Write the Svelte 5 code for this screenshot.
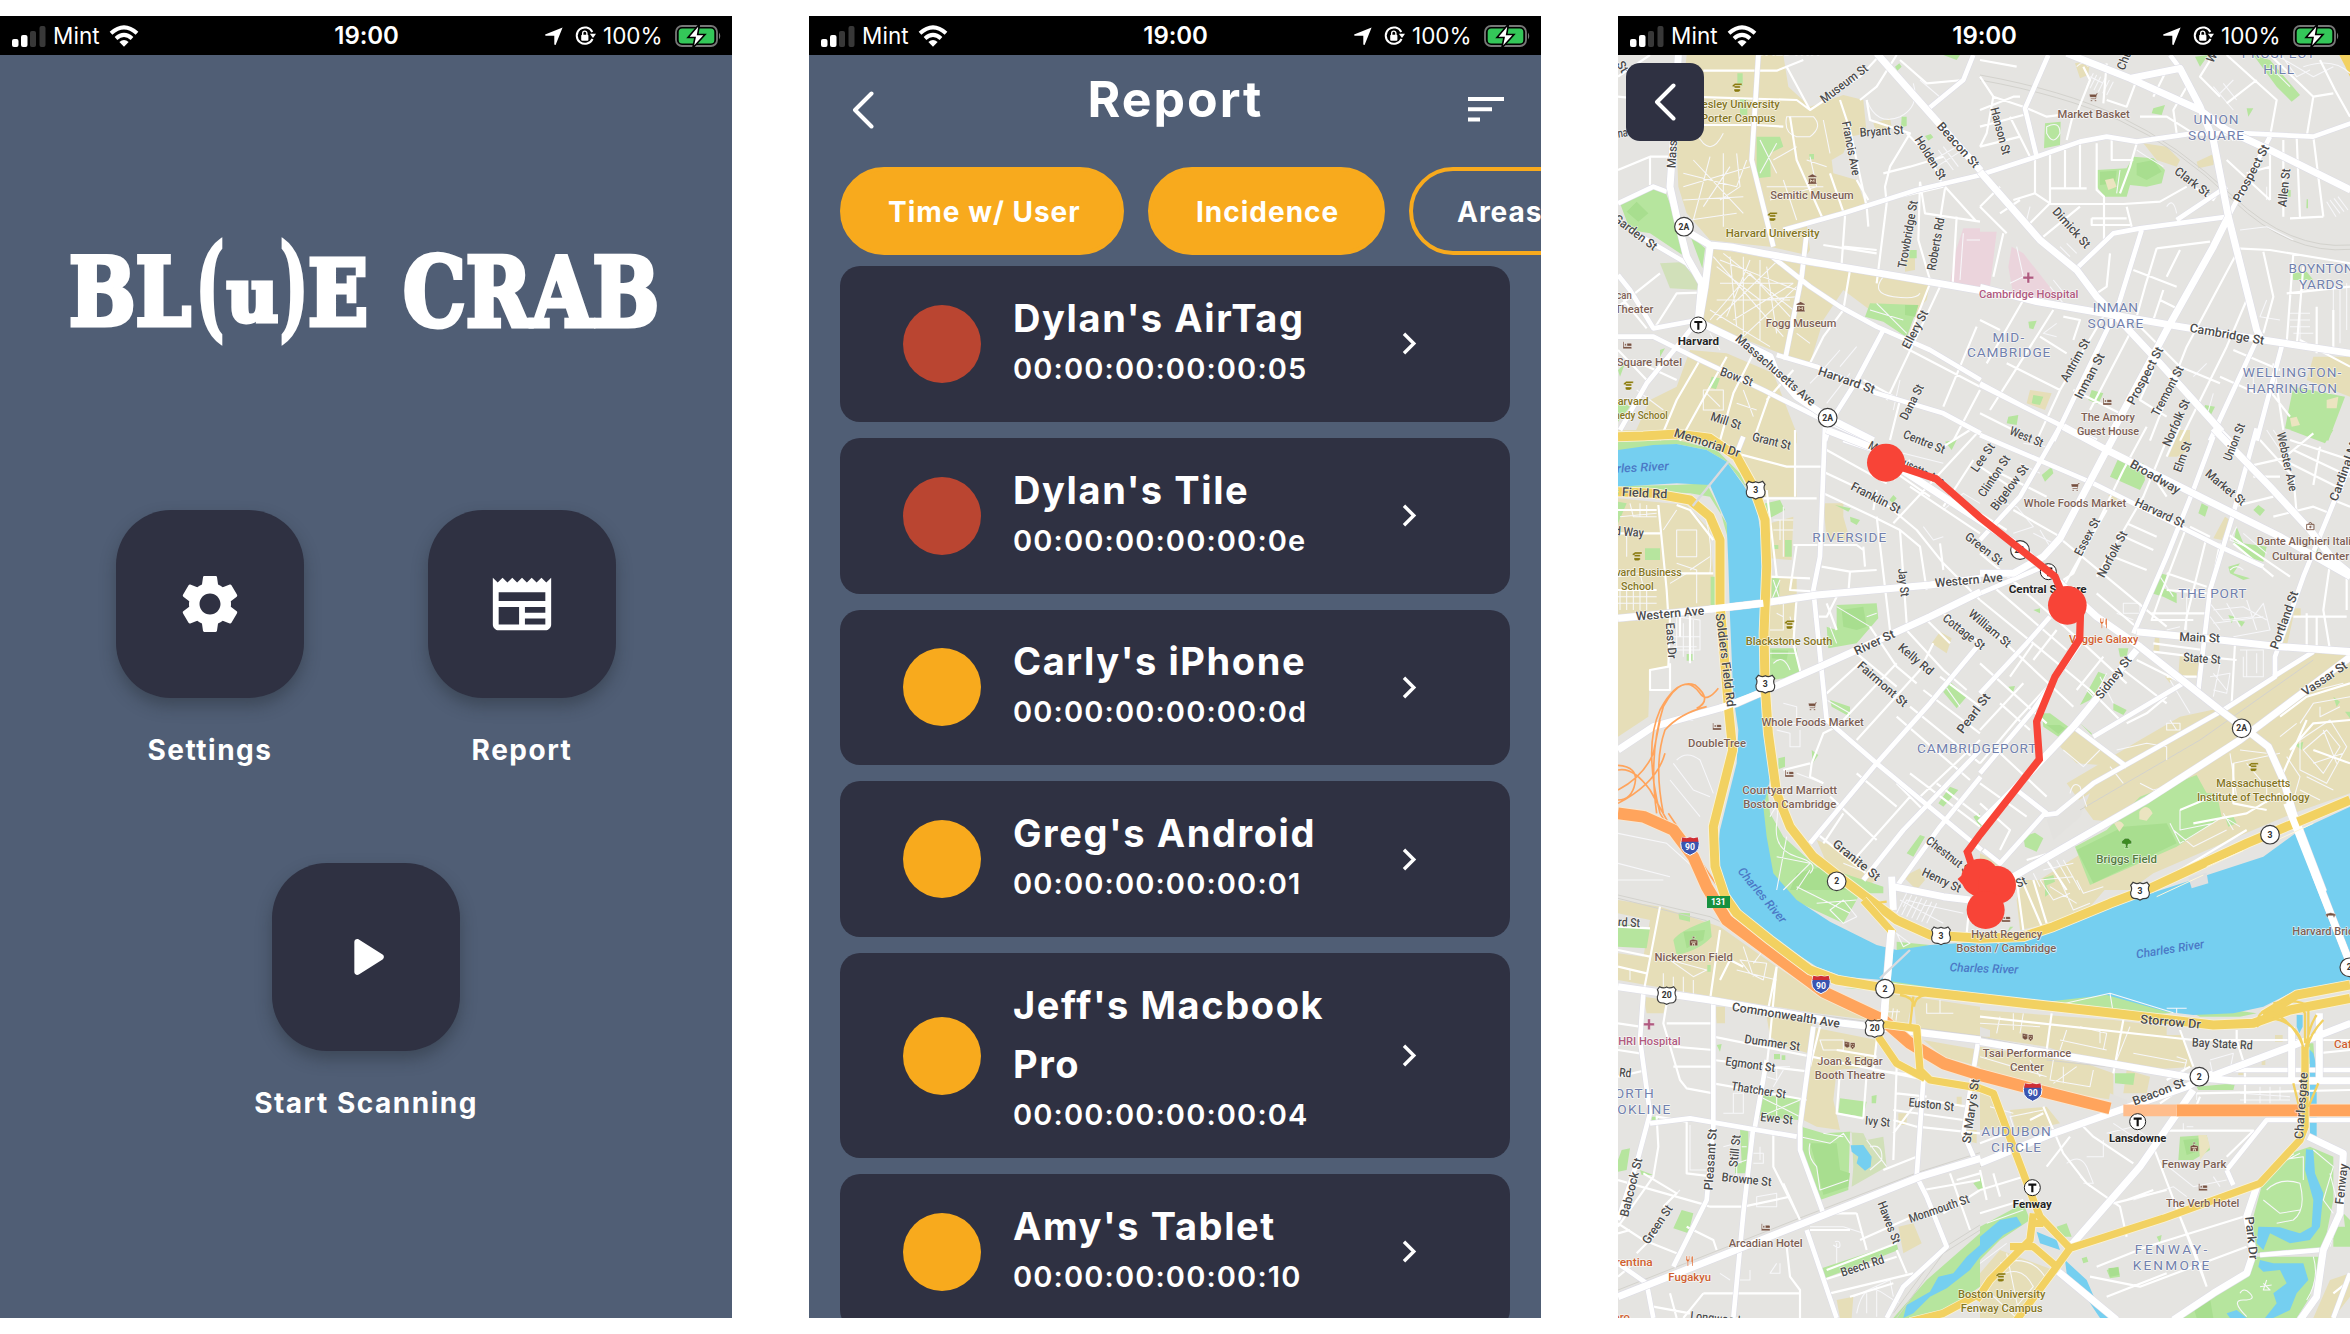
<script>
  const filters = [
    { name: 'Time w/ User', on: true },
    { name: 'Incidence', on: true },
    { name: 'Areas', on: false }
  ];
  const devices = [
    { name: "Dylan's AirTag", mac: '00:00:00:00:00:05', level: 'high' },
    { name: "Dylan's Tile", mac: '00:00:00:00:00:0e', level: 'high' },
    { name: "Carly's iPhone", mac: '00:00:00:00:00:0d', level: 'mid' },
    { name: "Greg's Android", mac: '00:00:00:00:00:01', level: 'mid' },
    { name: "Jeff's Macbook Pro", mac: '00:00:00:00:00:04', level: 'mid' },
    { name: "Amy's Tablet", mac: '00:00:00:00:00:10', level: 'mid' }
  ];

  const logo = [
    { t: 'BL', x: 69, y: 325, w: 122, s: 94 },
    { t: '(', x: 196, y: 325, w: 28, s: 110 },
    { t: 'u', x: 227, y: 321, w: 51, s: 72 },
    { t: ')', x: 280, y: 325, w: 28, s: 110 },
    { t: 'E', x: 308, y: 325, w: 60, s: 90 },
    { t: 'CRAB', x: 403, y: 326, w: 256, s: 96 }
  ];

  // Map tiles, two columns by three rows. Every tile draws in its own coordinates.
  const tiles = [
    {
      x: 0, y: 0,
      campus: 'M230 165H520L535 260L600 320L700 285L760 300L770 400L720 410L700 460L665 480L670 520L740 540L765 610L700 640L590 670L600 750L590 765L480 740L380 730L300 720L230 640L205 560L200 440Z M310 745L620 800L725 810L960 850L950 900L930 920L890 990L780 930L700 870L640 960L600 1090L510 1060L280 970L290 800Z M240 1050L350 1060L490 1120L560 1300V1330H60L120 1200L200 1160Z M790 370L840 355L845 380L800 400Z M885 775L915 770V810L885 815Z',
      sage: 'M150 790L240 785L275 870L180 865Z',
      park: 'M30 610L130 565L165 572L195 650L240 780L120 700L60 690Z M240 705L285 745L277 805Z M440 410H510L520 440L480 460L482 530L440 535Z M780 910L925 915L890 1012L820 965L765 950Z M305 1130L330 1135L318 1168L296 1160Z M382 220H398V258H382Z M390 295H412V345H390Z M855 200L868 190L875 200L862 212Z M875 350H890V378L873 382Z M945 408L962 402L970 412L955 422Z M898 750H920V775H898Z M598 462H612V478H598Z M24 1200L60 1220L24 1265Z M1000 165H1050L1040 180Z M24 1110L45 1090L30 1130Z M150 1050L165 1045L150 1070Z',
      darkpark: 'M50 635L80 605L115 640L85 665Z M885 915H925L915 950L885 945Z',
      pink: 'M1060 685H1110V865L1020 850L1035 760Z',
      major: 'M205 165L190 420L180 560L200 650L230 770L275 850L265 960 M240 700L300 735L370 742L460 760L600 785L870 830L1112 872 M265 965L400 1030L480 1070L500 1120L560 1190L653 1253L790 1322 M800 160L960 340L1112 512 M300 740L285 860L268 960',
      mid: 'M520 690L700 640L920 570L1112 525 M24 610L130 560L170 575 M60 690L230 790L280 850 M24 1010L130 1010L270 1080L460 1170L620 1250L780 1322 M445 165L425 480L490 740 M480 765L600 860L690 920L800 980L960 1050L1112 1140 M500 1065L620 1100L800 1180L1000 1240L1112 1300 M950 330L1060 240L1090 165 M820 990L735 1150L665 1260L645 1322 M265 960L200 1040L110 1150L30 1290 M590 700L575 830L525 1080 M24 825L60 870L130 985L265 960',
      minor: 'M230 290L560 300L600 330L750 230L810 165 M280 212H500L580 180 M530 200L600 330 M210 375H440L520 380 M690 300L720 390L770 620L775 680 M770 300L780 360L900 400L840 500L825 560L830 610L800 850 M820 520L900 500L1000 470 M930 545L945 640L1110 665 M1040 650L1028 850 M700 740L800 750 M720 810L700 930L640 1010L600 1090 M540 350L560 480L640 660 M660 520L705 650L695 790 M24 510L120 470V555 M120 470H200 M130 990L200 880L270 878 M350 1070L210 1322 M430 1060L370 1180L330 1322 M480 1180L430 1322 M880 1040L1110 1160 M760 1140L870 1200L840 1320 M1005 560L1100 665 M890 400L960 470L1000 560 M990 860L920 1010L830 1200 M1100 980L1000 1220 M1110 1170L1030 1322 M800 760L640 735 M930 545L925 720L960 840 M1005 565L990 660 M24 1050L110 1140 M70 1080L200 1140 M270 1080L200 1200L150 1320 M110 985L40 900 M24 920L100 860L150 820 M550 1110L470 1200 M960 850L890 1030 M860 165L800 260L750 300 M870 180L950 250L1060 240 M24 230L120 165 M120 300L24 290 M830 600L1000 560 M740 540L775 600',
      thin: 'M310 770L520 1010 M340 760L550 930 M500 785L320 960 M560 860L400 1010 M330 850H550 M320 900H540 M400 770V1010 M450 780V1020 M360 770L380 980 M320 800L450 900L560 890 M420 780L350 950 M470 800L500 1000 M300 930L480 1040 M330 780L560 870 M300 960L420 820L540 950 M370 960L550 850 M250 480L400 640 M220 520L380 560L410 480 M260 400Q300 480 340 400 M340 460V680 M300 470L250 660 M220 600L400 590 M240 660L380 640 M220 560L420 500 M280 620L360 500 M380 460L390 560L330 600 M530 350Q520 400 560 410H600Q640 380 610 350Z M450 420L500 520 M500 430L450 520 M470 560H640 M480 600L620 560L600 470 M520 540L560 660 M590 480L650 500 M490 480L560 440 M640 360L660 460 M820 830Q780 880 850 890T930 880 M780 930L880 960 M800 910L890 1000 M770 300Q800 380 870 350Q930 320 910 250 M985 450L1030 510 M1000 440L1045 500 M970 480L1040 440 M980 500L1050 455 M280 1170H340V1230H280Z M290 1180L330 1220 M400 1170L430 1250 M380 1210L440 1230 M80 1170L160 1230 M870 1140L850 1230 M690 1050L620 1130L600 1150 M740 1040L690 1100 M650 1210L720 1120 M300 1000L330 1050 M560 1000L600 1030 M1060 700L1050 840 M1110 720H1070 M930 240L1000 300'
    },
    {
      x: 1110, y: 0,
      campus: 'M285 190L330 180L325 225L300 235Z M490 430L560 440L600 480L590 500L530 480Z M650 485L705 460L700 495L655 505Z M1000 1070L1110 1070V1190L980 1140Z M150 1170L215 1180L195 1230L140 1210Z M600 1290L630 1290L620 1330H595Z',
      sand: 'M375 540L400 535L410 560L385 570Z M1040 1200L1075 1190L1070 1225L1040 1225Z M930 1255L950 1250L960 1275L935 1280Z',
      park: 'M195 370L242 365L240 435L192 445Z M350 510L440 505L460 470L520 475L555 510L545 550L500 560L450 555L440 590L375 590L350 560Z M520 325L555 315L545 345L515 340Z M645 170L685 165L660 200Z M820 165L870 180L960 285L935 305L890 260Z M800 325H820L805 350Z M335 1170L370 1180L355 1212L325 1200Z M675 1215L705 1220L690 1250L670 1240Z M145 965L170 962L160 988L148 985Z M940 1160L1095 1190L1045 1322L915 1285Z M935 820L980 815L1000 840H940Z M980 598H984V625H979Z M922 570H932V590H922Z M85 1250L115 1245L110 1275L80 1270Z M160 1185L190 1190L180 1215L155 1210Z',
      darkpark: 'M470 490L520 480L545 515L500 540L470 525Z M360 515L410 512L405 550L360 555Z',
      pink: 'M0 695H50L30 860H0Z M95 740L130 760L240 900L100 885L85 800Z',
      major: 'M260 160L450 235L660 330L740 390L870 450L1112 570 M0 515L180 720L290 810L350 890L400 940L540 1090L725 1295 M0 862L170 905L400 945L600 980L850 1020L1112 1060 M745 650L700 740L560 990L400 1290 M450 235L600 205L660 320L700 420L745 650L830 990L850 1030',
      mid: 'M0 525L170 470L300 425L380 410L470 425L640 400L800 400L1000 410L1112 370 M205 165L135 325L170 470 M290 805L400 700L480 685L745 650 M590 660L740 560 M870 410L745 650 M485 690L420 900L400 950L220 1322 M0 1150L130 1220L250 1280L350 1322 M0 1155L120 1215 M830 1020L690 1322 M905 1040L830 1322 M720 1290L760 1330 M570 165L600 205',
      minor: 'M0 180L110 200 M0 230L40 290L130 320L200 350L280 340L260 420 M0 330L100 290L120 290 M0 380L130 345 M40 290L20 400L0 440 M90 350L150 470 M0 440L120 410 M210 460V610 M255 450V565 M300 430V565 M210 565H320 M165 480V580L210 610 M350 430V570L372 590V720 M395 420V480H460 M470 430L450 500L420 580 M210 612H430L540 605L620 560 M100 600L165 580 M440 620L455 680 M335 655H440 M335 655V675H450 M60 640L120 600 M150 670L210 610 M190 710L300 620 M530 745L690 725 M530 745L495 860L470 950 M460 810L590 860 M390 760L380 860L350 880 M600 750L560 830 M550 870L520 960 M540 900L590 925 M770 745L870 750L1112 790 M850 755L880 890L850 1000 M940 760L920 1030 M770 760L620 1040L510 1322 M800 900L740 1040L600 1322 M870 165L1000 290L980 410 M740 165L890 300L870 410 M1110 350L1065 270L1020 180 M830 240L740 310 M1000 290L1060 280 M700 165L660 230L720 290 M560 210L520 290 M620 260L580 330L590 400 M470 240L440 320L380 300 M380 190L370 310 M1000 410L1030 650 M950 410L960 655 M910 420V650 M870 460V600 M930 655L1030 650 M740 480L870 600 M720 570L700 600L640 560 M800 520L870 500 M690 340L760 420 M370 950L240 1170L170 1322 M220 930L100 1120L30 1230 M130 900L20 1090 M0 960L60 990 M450 1000L330 1230 M250 950L300 960L280 1020 M470 970L600 1100L720 1150 M0 1240L100 1290 M760 1050L900 1110 M720 1130L830 1180 M880 1090L910 1290 M860 1160L930 1250 M1110 860L920 880 M1010 920V1060 M1060 930V1060 M970 800L950 1040 M520 1110L480 1200L560 1250 M280 1170L420 1240 M180 1010L260 1060 M80 1090L240 1170 M60 560L0 620 M70 700L40 830 M80 700L0 620 M290 340L330 240L310 200 M640 400L560 350H480 M960 1020L1110 1100',
      thin: 'M330 230L370 250 M340 220L320 260 M350 225L330 265 M362 230L342 270 M375 235L355 275 M388 240L368 280 M400 245L380 285 M290 200Q310 180 325 200 M200 380Q240 360 240 400Q220 440 200 400Z M470 450L500 470L550 500 M420 510L410 580 M560 620Q580 590 590 640 M730 250L770 300 M760 240L720 280 M700 260L760 330 M870 200L930 260 M900 160L950 230L990 210 M880 160L1000 230L1060 200 M1050 600L1080 640 M1062 595L1092 635 M1074 590L1104 630 M1040 605L1068 650 M930 940H990 M930 960H990 M930 980H990 M940 1000H1000 M960 930V1040 M1060 850V1000 M1080 870V1030 M1100 850V990 M780 690L860 680L940 720 M860 900L840 950L900 960 M640 1130L680 1090 M230 970L190 1000L230 1010 M240 740L270 770 M260 730L290 760 M210 860L250 910 M220 840L260 890 M110 740L130 830L90 850 M150 620L140 660 M970 200Q1060 170 1110 220 M820 1130V1180 M700 1180L680 1250 M860 560V600',
      rail: 'M0 225Q250 270 420 350T760 590T1110 735 M0 240Q250 285 420 362T760 602T1110 748'
    },
    {
      x: 0, y: 1290,
      campus: 'M24 0H550L560 200H460L420 120L350 60L200 20L24 30Z M24 205L230 225L300 300L310 430V540L24 565Z M24 575L185 565L175 710L120 720L115 860L24 920Z M480 440H560V520L550 640H475V500Z M480 280L550 260L545 390L480 385Z M640 220H700V260L720 330L650 330Z M965 640L990 605L1025 625L1010 670Z M620 1230L700 1260L800 1350L760 1375L650 1300Z M880 1340L930 1315L945 1350L920 1380Z',
      park: 'M24 35L200 30L320 60L390 130L440 240L455 300L430 200L350 95L290 60L200 42L24 62Z M24 168L200 165L290 160L330 240L355 330L350 280L300 200L240 190L24 178Z M302 440H316V540H302Z M445 225L510 210L525 240L450 280Z M680 525L800 520L805 565L740 640L655 655L650 590L680 600Z M480 655L560 655L570 740L480 750Z M485 445H508V505H485Z M105 355H150V390H105Z M24 215L50 220L24 280Z M660 810L720 830V860L665 830Z M995 780L1015 750L1070 800L1040 835Z M505 985L525 980V1010L505 1018Z M605 960L625 975L608 1000Z M470 1050L480 1150L520 1220L620 1310L700 1330L820 1370V1390H490L470 1260L455 1160Z M230 672H248V692H230Z M720 260L750 270L740 285L722 275Z M675 225L722 235L715 245Z M490 345H505V357H490Z M525 330H545V380H525Z M1005 35L1040 30L1025 60Z M985 1120L1020 1070L1045 1080L1000 1130Z M890 1270L930 1215L945 1220L910 1280Z M838 210L850 195L860 205L848 220Z M1090 1160L1110 1150V1190Z',
      darkpark: 'M695 540L760 530L770 590L740 600L700 590Z M485 660L535 662L530 690L485 685Z M560 1330L640 1310L720 1380H540Z',
      major: 'M24 565L330 535L455 520L620 495L960 465L1112 445 M24 960L130 890L380 820L630 710L740 660L960 560L1112 485 M650 0L780 50L830 80',
      mid: 'M645 -10L630 380L610 480L650 870L800 1000L1115 1260 M1110 640L960 820L800 1000L600 1240 M1110 960L880 1200L760 1350 M1112 1040L990 1190L860 1370 M700 30L790 60 M400 20L380 70',
      minor: 'M380 70L530 110H640 M555 0V200 M460 205H620 M640 125L800 200L920 300L1000 400L1110 510 M640 190L790 260L870 300L930 350L950 480 M800 260L840 600 M870 300L890 580 M635 410L720 425L800 420 M560 345L540 480L620 485 M550 345H630 M720 425L715 490 M760 350L765 410 M640 345H740L760 360 M650 520L680 600 M680 500L650 560H610 M780 590L860 710L920 760 M740 670L860 770 M560 500L550 640L575 740 M480 440L600 445 M650 790L760 690 M700 870L860 700 M740 930L930 720 M620 870L650 870 M660 1100L800 1230 M740 1030L860 1130 M860 1060L940 1140 M900 1030L1110 1190 M740 1280L900 1100 M620 1210L780 1340 M700 1150L640 1240 M930 1100L1110 930 M980 1060L1110 1160 M860 860L1080 1050 M900 830L1110 1000 M940 780L1110 910 M990 740L1110 830 M880 590L1000 720L1070 780 M950 570L1020 640 M1000 550L1110 640 M970 640L930 720 M700 880L640 910L605 1000L600 1040L640 1060 M520 1020L600 1000 M480 450L475 520 M200 225L240 240L310 330 M145 225L170 480L175 560 M24 310H150 M150 430H310 M24 480H140 M180 560L175 710L120 720V780H180V700 M240 550V700 M210 560V620 M24 240H140 M1110 0L850 280 M1000 50L1080 0 M900 170L1110 310 M860 130L960 200 M800 180L790 240 M990 340L1000 420 M470 180L500 440 M850 150L900 90 M1090 90L1000 230 M650 60L830 160 M1020 200L1110 260',
      thin: 'M60 220L70 260H140 M90 220V260 M110 225V260 M30 260L140 250 M50 310V380 M200 240L160 300 M200 300H260V380H200Z M200 400L260 420V520 M180 460L230 430 M280 240Q310 330 300 430 M24 500H140 M24 520H140 M30 480V540 M50 480V540 M70 480V540 M90 480V540 M110 480V540 M24 440L90 430L100 470 M200 560L270 570V660H200Z M220 580V680 M250 570V690 M190 620H270 M190 650H260 M190 1000L250 1080L300 1100 M180 1050L270 1160 M200 990Q230 960 270 990L310 1090 M24 1210L170 1240L270 1330 M24 1300L180 1340 M24 1350H160 M520 520V600H480 M500 550L520 560 M520 820L560 830V880H500 M500 900L540 910V950H570V900 M560 1030L640 1060 M540 560L550 600 M490 270H550 M520 230V380 M510 270V330 M550 300H490 M480 670L560 670 M490 700Q520 670 540 720 M480 1160Q510 1100 500 1180T560 1280T600 1330 M500 1280L600 1300L520 1380 M530 1220L500 1380 M560 1380L600 1320 M680 530L780 590 M770 560L800 550 M660 590L680 640 M490 450L510 510 M510 450L485 510 M650 810L720 850 M1000 760L1050 830 M940 290L970 330L1000 320 M820 110L880 70L1000 100 M1000 240L1060 190L1110 220 M700 1300L800 1340 M240 420L300 380 M150 880L250 870'
    },
    {
      x: 1110, y: 1290,
      campus: 'M600 0H630V60L590 80L565 80Z M385 195L420 190L400 230Z M735 260L750 270L725 330L700 325Z M525 620H538V665H520Z M600 670L660 690L650 740L595 735Z M555 740L580 735L570 760Z M940 535H962V560H940Z M905 570L940 560L920 650H900Z M280 900L340 930L430 1010L290 1000L240 950Z M1000 665H1110V1090L940 1150L820 1200L520 1330L450 1380H130L450 1180L340 1170L260 1060L480 930L600 860L740 830L880 740Z M0 1270L60 1300L40 1350L0 1330Z M1060 900H1110V990H1070Z',
      plain: 'M200 1170L330 1090L300 1160L220 1230Z',
      park: 'M415 85L435 100H490L495 150L480 180L390 140Z M665 220L685 230L675 260L655 250Z M835 225L855 240L840 258L820 240Z M185 135L215 110L220 130L195 155Z M770 290L790 340L860 350L850 395L800 380L760 340Z M745 410L780 400L760 430L810 445L790 450L750 430Z M540 430L560 435L550 475L590 490V520L550 500L515 490Z M745 555L765 560L755 580Z M770 570L795 575L785 590Z M415 655L445 655L440 680H420Z M355 725L380 735L330 810L300 825Z M400 820L440 840L430 855L400 840Z M185 850L210 850L265 890L235 920L190 890Z M300 880L335 910V915Z M85 770L105 768L98 790Z M130 1220L165 1208L190 1225L170 1265L135 1250Z M285 1250L380 1200L480 1100L650 1035L680 1090H710L725 1160L590 1250L330 1365Z M190 1345L220 1335L225 1355L195 1368Z M160 540L180 535V550Z M1060 800L1080 815L1070 830Z M945 945L970 935L965 960Z M1095 845H1110V865Z M20 420H40L35 440Z M1000 365L1015 355L1010 380Z M930 0H1060L1035 40Z M0 1165L15 1180L0 1190Z M735 1160L760 1160L770 1180L745 1190Z',
      darkpark: 'M290 1260L430 1190L560 1180L590 1240L340 1360Z M200 885L240 885L255 895L235 912Z',
      sand: 'M478 1145Q500 1115 518 1150L500 1172L478 1168Z M402 1180Q420 1165 432 1185L418 1205Z',
      major: 'M0 430L100 430L190 380L240 325L380 60L415 -5 M-280 90L120 350L350 560L480 650L720 840L800 900L865 950L910 1050L940 1150L1030 1385 M700 -5L870 170L990 300L1060 390L1112 432 M470 605L720 630L900 650L1112 665 M1112 680L780 930L500 1110L100 1340 M470 660L280 890L100 1080L0 1180 M250 -10L380 60L500 120L640 190L760 250L900 320L1112 440',
      mid: 'M830 -5L760 250L690 480L655 780 M700 20L640 180L560 380L460 610 M1110 110L1060 220L970 440L885 680V740L730 840L340 1060L230 1150L190 1155L60 1300L10 1260 M1000 665L880 740 M340 920L610 760 M280 890L440 1010 M0 15L200 100L340 160L560 270L720 350L850 410 M240 -10L120 200L0 330 M0 490L190 410 M300 640L160 840L0 1030 M0 790L140 640L210 560 M110 1080L200 1150',
      minor: 'M500 -10L430 120L280 430L250 450 M560 30L490 200L350 440 M420 80L500 110L560 200 M380 240L250 470 M240 325L560 590 M600 -10L560 80 M440 280L530 320 M410 310L520 360 M400 380L500 420 M620 290L540 500L515 570H640 M680 320L620 560L615 600 M560 480L680 490 M630 290L690 320 M515 550H680 M560 430L680 470 M720 340L700 440 M760 340L880 440 M740 310L930 440 M800 110L910 85L1000 10 M820 140H900 M870 170L950 250 M840 30L940 140L950 250 M930 30L1110 90 M940 60L1110 140 M910 90L1090 180 M1000 165L1020 50 M1060 210L1110 230 M880 260L1000 230L1050 250 M1050 400L1030 540L1050 660 M1100 430V540 M940 560H1100 M980 550V650 M1010 560V650 M520 665L640 680 M520 640L670 660 M670 680L770 690 M765 640L755 820 M560 740H650 M860 650L780 640 M0 510L160 640L330 780L420 870 M40 470L260 660 M60 420L310 640L440 760 M0 570L120 680L280 830 M0 700L200 880 M0 900L130 760 M0 1000L110 870L230 740 M160 640L90 740 M230 600L160 690 M370 680L290 780 M60 820L150 900 M50 960L200 1100 M470 690L610 760 M430 720L560 820 M440 880L500 850L560 800 M0 1060L140 1160 M0 1120L90 1200L60 1260 M140 1290L240 1260 M200 1290L260 1380 M0 370L120 470 M0 250L80 300 M100 240L240 320 M60 130L200 200 M0 110L90 170 M640 1180L800 1150L900 1090 M600 1140L720 1090 M500 1380L800 1200 M760 1000V1120L860 1140 M980 870L900 1050 M900 860L980 800L1110 760 M1110 870L1000 880L930 960 M1000 960L1110 1000 M880 200L760 230 M350 490L480 600',
      thin: 'M690 520L730 570L820 560L850 520L870 600L760 620 M700 540L790 530L860 570 M720 600L690 560 M740 520L780 590 M800 510L830 600 M700 580L850 560 M620 500V600 M580 570H620 M560 600L600 590 M780 660H850V740H790V680 M800 660V740 M830 670V730 M690 740L750 730L740 790L700 780 M700 730L740 780 M720 700L700 800 M560 880H600V900H560Z M570 870L590 900 M480 1060L520 1080L560 1070 M250 960L310 1010L360 960 M270 1090Q280 1050 300 1070L320 1130 M410 960L500 940L560 950V990 M390 1010L430 1060 M360 740L400 820 M380 730L340 810 M320 780L350 810 M770 290L750 330L800 350 M790 310L860 370 M750 420Q770 400 790 420 M540 440L580 500 M600 1140V1200L700 1180 M580 1200L640 1250L740 1200 M570 1180L600 1240L730 1160L780 1190 M730 1150L760 1200 M960 930L1050 870L1100 950L1040 1060L960 1020Z M970 960L1040 900L1080 950L1030 1030Z M920 980L960 1040L940 1110 M900 920L950 880 M960 880L1000 820L1110 800 M1010 780L1090 760 M1020 830V860L1080 830 M1030 900L1070 1000 M980 1040L1060 1080 M1000 1000L1090 970 M780 960L860 970 M800 1000L850 1060 M760 1000L900 970 M860 1070V1120 M750 970L770 1100 M960 1080L1020 1110 M210 1300L250 1370 M230 1290L270 1360 M160 1330L180 1370 M250 1290L300 1380 M190 1320L280 1300 M180 1350L280 1340 M860 0L900 60 M880 0L900 30 M130 40L200 50 M40 210L110 230L160 290L100 310 M120 100L180 130 M160 310L220 340 M180 300L210 350 M430 520H480V550H430Z M410 550L460 570 M570 750L630 850',
      rail: 'M300 1140L660 930L1000 690'
    },
    {
      x: 0, y: 2640,
      campus: 'M24 60L150 80L330 140L500 260L620 340L800 400L780 420L620 400L310 350L24 300V220L100 230L120 120L24 100Z M100 350L170 360L160 400L110 400Z M600 440L800 480L790 560L680 570L670 660L690 750L620 740L580 720L600 560Z M910 350L1110 380V470L920 450Z M830 340L910 350L890 440L830 420Z M470 410H610L595 520L530 500L480 470Z M940 480L1110 510V560L1000 530Z M980 530L1110 590 M865 1040L910 1030L935 1090L880 1120Z M680 1260L730 1250L725 1314H690Z M865 700H890V735H865Z M1060 750H1100V790L1060 780Z M1040 650H1055V680H1040Z M315 380H345V430H320Z',
      park: 'M24 130L120 145L110 205L24 200Z M190 180Q210 150 300 120L305 170Q270 210 200 225Z M205 98L240 100V125L208 118Z M450 645L570 655L565 720L440 710Z M690 655L770 665L760 710L685 700Z M575 740L640 760L720 755L715 930L630 960L575 840Z M390 745L415 750V880H375V850H395Z M35 810L60 805L50 870L24 875V840Z M90 870L130 885H95Z M215 990L250 1000L235 1060L190 1045Z M635 1165L860 1090L865 1110L645 1195Z M850 1314L950 1200L1110 1060V1220L980 1310L900 1314Z M320 495L335 492L330 515Z M492 522H510V538H492Z M515 526H526V540H515Z M785 648L800 645L798 670H785Z M1090 910L1110 900V935Z M500 0L560 65L700 130L740 60L760 20L700 0Z M860 185L960 195L900 210H860Z M740 325L850 300L940 310L1040 330V345L700 325Z M740 700H760V710H740Z M125 710H145V722H125Z M292 255H302V275H292Z',
      sage: 'M700 755H725L730 860L725 920L830 860L820 770L770 780L760 760Z',
      darkpark: 'M600 790L680 790L690 870L720 880L715 920L640 945L620 860Z M220 155L285 150L280 180L230 205Z',
      water: 'M722 796L760 795L785 830L782 860L765 872L740 850L745 830L725 815Z M880 1314L890 1275L960 1235L985 1190L1030 1180L1070 1130L1110 1095V1130L1080 1170L1010 1225L960 1250L910 1300Z',
      plain: 'M860 30L1090 60L1070 160L920 150L860 90Z M700 130L760 30L850 150L840 205L760 190Z',
      yellow: 'M800 430L920 445L930 570L960 600L1112 625 M805 470L860 550L945 595 M760 60L850 160 M900 1325L1000 1300L1112 1240',
      yellowThin: 'M910 350L900 440 M870 345Q910 350 912 380 M945 345Q915 350 912 380 M790 70L830 65',
      major: 'M24 320L300 360L700 430L1112 480 M24 1250L580 1030L930 890L1112 835 M850 20L1000 50L1080 60 M843 150L820 420 M845 -10L850 90',
      mid: 'M310 370V740L290 960L190 1160 M100 340L90 480L120 700L80 850L24 1020 M120 730L240 715L560 770 M430 740L400 1000L370 1314 M610 440L570 740V810L640 1000 M590 1050L680 1314 M940 600L920 890L950 950L1010 1100L880 1220L830 1314 M24 1150L110 1210L130 1314 M470 540L435 740 M1105 480L1060 760L1095 840',
      minor: 'M150 80L100 340 M24 140L120 145 M24 210L120 230 M330 150L300 360 M500 260L480 470L470 560 M24 260L110 280 M310 470L1000 610 M310 540L600 575 M310 610L590 660 M170 370L160 430L210 600L230 625L310 640 M170 430H310 M190 500L310 510 M190 560H310 M24 510L90 520 M24 590L110 570 M400 260L360 240L330 300 M310 360L420 390 M630 440L600 560 M690 570L680 700L760 715 M800 480L790 570L950 590 M770 580L760 715 M860 560L850 840 M680 510L800 530 M950 660L1070 680 M850 720L920 740L1110 760 M850 690L1060 720 M850 760L940 640 M740 1000L770 1110 M750 1080L930 1000 M720 1250L850 1210 M230 725V880L310 890 M230 725L140 710L145 800L130 890L24 1040 M24 900L270 970L300 980 M100 880L200 940L160 980 M300 980H400L540 950 M520 910L570 1020 M490 760V860L560 1000 M24 1030L100 1080L200 1120 M80 1120L140 1060 M230 1040L310 1080L320 1110 M24 1060L60 1050 M640 1000L740 1000 M180 1240L200 1314 M24 1190L60 1160 M530 1100L540 1190L570 1230V1314 M280 1240H570 M280 1240L220 1314 M820 870L920 830 M860 640L950 650 M640 1200L860 1130 M660 1240L910 1180 M860 1110L890 1180 M720 1050L600 1050 M940 930L1110 900 M1020 880L1080 1050 M1110 930L1000 1000 M130 1280L240 1300 M650 1170L860 1090 M1110 880L1040 900 M1080 60L1070 160 M24 430L90 440 M500 260L470 410',
      thin: 'M160 280V320 M190 290V340 M220 290V340 M250 300V345 M60 270V300 M390 240L470 250L460 300L420 280Z M400 200L430 290 M430 250L460 210 M380 270L500 300 M630 480H700V510H640Z M830 395H870 M835 380L830 420 M850 385L845 420 M862 388L858 422 M880 80L890 60L970 80L1060 100 M870 60L1000 130 M890 40L860 100 M905 45L875 105 M920 50L890 110 M935 55L905 115 M950 60L920 120 M965 65L935 125 M980 70L950 130 M860 160L900 190L880 200Z M450 650L570 710 M570 660L450 710 M500 650V710 M600 790Q590 830 620 860L630 930L715 900 M570 770L660 790L700 760L720 790 M640 760L700 770 M780 800Q820 790 815 840L780 870 M770 780L830 860 M680 1090V1150 M675 1085Q690 1080 690 1095T670 1095 M380 900V850L410 840 M395 800H410 M430 820H460V850H430 M450 800V840 M370 640H400V700H370Z M340 700H380 M340 800L380 790 M380 840L360 850 M470 590L500 600V560H540 M490 620L520 570 M240 735V870H300 M500 1150L480 1180H510V1150 M420 1170V1200H390 M730 1250L840 1200L850 1250 M740 1300Q760 1200 820 1240T860 1260 M770 1240V1300 M800 1220V1310 M440 950L500 940V980H440Z M210 930L160 980 M330 1180L360 1200 M700 1040L760 1060 M600 1040H700 M560 20L720 100 M700 60L740 110L700 130L660 90Z M620 70L740 60 M850 310L940 340 M180 240L290 270L250 290Z M950 370V400H1030 M990 360V400',
      rail: 'M24 1230L580 1010L930 875L1110 818 M24 325L700 415L1110 468 M24 45L300 110L340 130 M24 55L290 122 M1110 1050L1000 1120L860 1314 M1110 1035L990 1110L850 1300'
    },
    {
      x: 1110, y: 2640,
      campus: 'M0 390L400 420L600 445L640 560L500 570L330 545L200 500L0 470Z M0 500L330 555L400 580L400 660L200 630L0 570Z M0 630L40 650L80 740L0 750Z M90 690L200 680L240 730L110 760Z M130 0H400L330 80L210 130L120 150L110 60Z M440 570L510 590L500 640L430 640Z M60 1110L220 1170L110 1314H0V1180Z M885 465H908V485H885Z M775 565L790 560V585H775Z M845 525H856V555H845Z M1050 1200L1110 1180V1250L1060 1314H1000Z',
      plain: 'M0 440L30 450V470H0Z M560 440H600V465H560Z M390 640L440 660V700H380Z',
      park: 'M210 362L380 340L470 350L580 398L500 405L300 375Z M640 400L740 388L830 400L780 410H660Z M405 580H465L460 615L405 610Z M650 620L765 610L760 630H655Z M600 770L680 765L690 810L640 840H595Z M900 830L990 800L1060 830V960L1030 1110L820 1120V1010L850 900Z M810 1130H1020L990 1250L950 1314H600L700 1245L800 1190Z M985 490H1000L1005 560L985 550Z M0 1040L130 970L150 1020L60 1080L0 1140Z M380 1170L415 1160L420 1190L390 1195Z M530 1070L545 1065L540 1090Z M305 1135L320 1130L325 1145L310 1150Z M230 1040L260 1030L275 1070L240 1070Z M0 880L10 930H0Z M100 140H90L80 160Z M360 80L440 55L430 80L370 90Z M195 10L210 40L195 50Z M1060 1040H1110V1100H1060Z M1090 1000L1110 1020V1040H1095Z',
      darkpark: 'M385 1165L415 1162L418 1185L390 1190Z M610 780L660 775L665 810L620 825Z M640 1280L690 1255L700 1314H650Z',
      water: 'M978 808L1000 810L1005 880L1030 940L1020 1040L990 1080L930 1090L870 1060L850 1110L830 1090L835 1040L900 1042L960 1060L995 1040L1000 960L975 870Z M840 1140L880 1150H970L985 1200L950 1240L930 1290L880 1314H855L890 1270L880 1240L920 1210L900 1170L850 1175L835 1160Z M950 405H968V440L958 460L950 440Z M980 500L1000 520L1010 560V780H990V540Z M0 1070L60 1020L110 1010L125 1035L70 1065L0 1130Z M170 1055L230 1080L240 1110L180 1090Z M255 1140L320 1200L350 1270L405 1314H360L310 1240L260 1180Z M740 1300L770 1290L800 1314H750Z',
      sand: 'M655 765H680L690 800L660 840Z',
      yellow: 'M0 625L40 640L100 800L160 960L180 1010L270 1105L550 1015L840 910L960 780L975 740V500 M160 1000L150 1080L30 1200L-10 1260 M90 1100H160L230 1160L270 1105 M230 1160L110 1320 M160 1030H190',
      yellowThin: 'M975 520Q960 450 900 410T830 430 M970 520Q970 460 920 430T830 440 M975 520Q985 440 1010 405 M980 510Q990 460 1030 420 M985 500V380Q960 355 880 370 M975 490V400Q950 360 900 400 M940 610L960 690 M1015 610L985 680',
      major: 'M0 485L330 540L620 590L760 602H1112 M690 590L930 500L1112 430 M0 850L220 760L620 620L700 580 M640 630L480 860L270 1100 M235 1175L410 1320 M985 770L1090 820L1080 1000L1030 1110L1010 1250L960 1320 M830 920L800 1010L820 1120L800 1180L700 1240L580 1320 M1005 -20L1112 255 M1018 400V600 M935 440V600',
      mid: 'M760 570H1112 M740 870L860 720H1112 M740 870L760 915 M840 1125L1020 1110 M1110 1180L1060 1314',
      minor: 'M215 400L200 510 M430 420L400 580 M600 450L640 560 M770 450V480L795 560V670 M0 410L640 480H1110 M300 730L340 770L460 850 M190 680L250 820L320 910L420 980L440 1070 M520 800L680 1220 M350 1160L500 1100L790 1010 M330 1190L480 1220L800 1100 M400 970L560 930 M0 790L80 760 M0 870L20 960 M0 930L130 890 M560 752H820L740 830 M650 640L1110 630 M440 960L520 930 M380 1250L560 1180 M680 1220L650 1130L600 1010 M190 700L150 720 M540 670L640 600 M40 880L60 950 M630 560L560 600 M660 650L640 700 M0 1000L130 960 M850 910L880 860L940 820 M1060 1240L1110 1200 M110 0L130 150 M270 770L200 860 M1110 510L1010 520 M130 10L190 150 M160 0L200 130',
      thin: 'M0 430L180 440 M60 410L50 460 M100 400V450 M130 400L120 460 M260 450L240 510 M300 440L380 460L370 510 M240 480L380 510 M360 450V490 M450 440L410 540 M460 520L620 550 M590 530L620 540L610 580 M0 530L200 590 M220 540L210 600L330 620L340 570 M250 560V610 M290 560L220 610 M150 540L180 590 M690 540L760 520L750 570 M690 545L700 590 M780 660H930 M780 640L930 650 M650 660V640 M840 620V670 M870 620V670 M900 620V660 M380 760L460 740L500 770 M400 730L460 770 M320 830H370V780 M260 850Q300 820 320 860L340 910H310 M300 890L330 920 M610 730V750 M620 740H640 M540 840L640 920L740 900 M700 890L720 920 M860 930Q900 890 960 910Q980 990 940 1020L890 1030 M850 960L900 1000L960 990 M880 860L960 820 M900 840L970 830V900 M1000 810L1060 860L1030 960L1060 1000 M1050 880L1080 1000L1050 1100 M780 1240Q790 1220 810 1240T790 1260T800 1310 M850 1210L870 1230L850 1230L860 1200 M840 1220L875 1215 M1000 1130Q1020 1200 980 1260 M60 1150Q160 1120 200 1200L120 1300 M40 1200Q120 1140 160 1220L100 1290 M80 1120L120 1314 M20 1230L110 1314 M20 1030L130 990 M0 1150L80 1090 M210 380L390 340L580 398 M390 340L400 400 M180 0L220 60L270 40 M210 20L290 70 M240 0L280 90L330 70 M290 0L310 40L370 20 M560 385H620 M590 385V400 M30 680L100 700 M100 740L90 710L190 690 M620 950L580 920L460 960',
      rail: 'M0 860L120 790L300 740 M200 540L560 580 M0 470L200 510'
    }
  ];

  // text, centre x, centre y, drawn width, angle, kind
  const labels = [
    [
      ['BALDWIN', 535, 152, 190, 0, 'hood'], ['St', 38, 200, 34, 60], ['na', 38, 398, 30, -8],
      ['Lesley University', 383, 311, 252, 0, 'edu'], ['Porter Campus', 385, 353, 224, 0, 'edu'],
      ['Museum St', 702, 250, 168, -37], ['Francis Ave', 724, 445, 165, 79], ['Bryant St', 815, 393, 132, -4],
      ['Beacon St', 1045, 435, 170, 48], ['Holden St', 962, 473, 145, 58], ['Mass', 186, 462, 84, -87],
      ['Semitic Museum', 606, 586, 250, 0, 'poi'], ['Harvard University', 488, 698, 282, 0, 'edu'],
      ['Garden St', 77, 697, 152, 37], ['Trowbridge St', 893, 703, 205, -80], ['Roberts Rd', 977, 732, 160, -80],
      ['can', 42, 885, 46, 0, 'poi'], ['Theater', 72, 927, 116, 0, 'poi'], ['Fogg Museum', 573, 970, 212, 0, 'poi'],
      ['Harvard', 265, 1024, 124, 0, 'stop'], ['Square Hotel', 118, 1085, 196, 0, 'poi'],
      ['Massachusetts Ave', 497, 1110, 305, 41], ['Bow St', 380, 1130, 102, 20], ['Harvard St', 710, 1140, 178, 19],
      ['Ellery St', 915, 988, 125, -62], ['Dana St', 905, 1206, 115, -63],
      ['Harvard', 58, 1203, 116, 0, 'edu'], ['Kennedy School', 68, 1245, 210, 0, 'edu'], ['Mill St', 348, 1262, 94, 18]
    ],
    [
      ['Chu', 432, 180, 60, -68], ['W', 695, 172, 28, -60], ['PROSPECT', 895, 160, 220, 0, 'hood'], ['HILL', 896, 208, 92, 0, 'hood'],
      ['UNION', 708, 358, 135, 0, 'hood'], ['SQUARE', 708, 406, 168, 0, 'hood'], ['Market Basket', 341, 341, 217, 0, 'poi'],
      ['Hanson St', 62, 393, 145, 75], ['Clark St', 637, 545, 122, 37], ['Prospect St', 813, 520, 190, -62], ['Allen St', 912, 563, 115, -84],
      ['Dimick St', 275, 683, 150, 48], ['Cambridge Hospital', 146, 881, 298, 0, 'med'], ['INMAN', 406, 923, 136, 0, 'hood'],
      ['SQUARE', 406, 971, 167, 0, 'hood'], ['MID-', 85, 1012, 95, 0, 'hood'], ['CAMBRIDGE', 86, 1058, 250, 0, 'hood'],
      ['Cambridge St', 741, 1002, 226, 10], ['BOYNTON', 1023, 806, 195, 0, 'hood'], ['YARDS', 1023, 854, 132, 0, 'hood'],
      ['Antrim St', 285, 1080, 142, -61], ['Inman St', 328, 1128, 150, -62], ['Prospect St', 495, 1127, 190, -62],
      ['Tremont St', 562, 1173, 165, -62], ['Norfolk St', 588, 1268, 150, -66],
      ['WELLINGTON-', 936, 1116, 295, 0, 'hood'], ['HARRINGTON', 935, 1164, 272, 0, 'hood'],
      ['The Amory', 384, 1252, 162, 0, 'poi'], ['Guest House', 384, 1294, 186, 0, 'poi']
    ],
    [
      ['Memorial Dr', 292, 38, 206, 18], ['Grant St', 485, 33, 118, 14], ['Centre St', 943, 35, 132, 22],
      ['Massachusetts Ave', 890, 100, 250, 27], ['Charles River', 65, 113, 222, -3, 'river'], ['Soldiers Field Rd', 30, 185, 285, 3],
      ['Franklin St', 798, 203, 162, 27], ['RIVERSIDE', 718, 322, 222, 0, 'hood'], ['Harvard Way', 10, 302, 184, 4],
      ['Harvard Business', 90, 425, 250, 0, 'edu'], ['School', 82, 467, 98, 0, 'edu'], ['Jay St', 881, 457, 85, 84],
      ['Western Ave', 180, 550, 205, -5], ['Western Ave', 1076, 450, 204, -5], ['East Dr', 184, 632, 108, 86],
      ['Soldiers Field Rd', 347, 690, 283, 83], ['Blackstone South', 537, 632, 260, 0, 'edu'], ['River St', 793, 637, 130, -25],
      ['Kelly Rd', 918, 687, 125, 40], ['Fairmont St', 818, 762, 186, 41], ['Cottage St', 1062, 605, 150, 38], ['William St', 1140, 595, 155, 40],
      ['Green St', 1122, 355, 132, 38], ['Whole Foods Market', 608, 877, 307, 0, 'poi'], ['DoubleTree', 321, 938, 174, 0, 'poi'],
      ['Courtyard Marriott', 539, 1080, 284, 0, 'poi'], ['Boston Cambridge', 539, 1123, 279, 0, 'poi'], ['Pearl St', 1090, 850, 140, -53],
      ['CAMBRIDGEPORT', 1100, 955, 358, 0, 'hood'], ['Granite St', 740, 1290, 172, 39], ['Chestnut St', 1018, 1277, 165, 38],
      ['Henry St', 995, 1350, 125, 25], ['Charles River', 457, 1395, 205, 50, 'river']
    ],
    [
      ['West St', 140, 20, 105, 22], ['Union St', 762, 36, 118, -68], ['Webster Ave', 922, 95, 180, 78], ['Lee St', 8, 82, 96, -55],
      ['Clinton St', 42, 138, 142, -56], ['Bigelow St', 88, 172, 162, -53], ['Broadway', 526, 140, 168, 30], ['Elm St', 607, 80, 95, -70],
      ['Market St', 737, 172, 145, 40], ['Harvard St', 540, 248, 160, 25], ['Whole Foods Market', 285, 219, 307, 0, 'poi'],
      ['Essex St', 321, 320, 122, -62], ['Norfolk St', 396, 372, 152, -62], ['Cardinal Medeiros', 1112, 66, 310, -70],
      ['Dante Alighieri Italian', 990, 334, 320, 0, 'poi'], ['Cultural Center', 992, 377, 232, 0, 'poi'], ['THE PORT', 697, 490, 205, 0, 'hood'],
      ['Portland St', 912, 570, 182, -70], ['Main St', 659, 622, 122, 2], ['State St', 666, 685, 112, 4], ['Vassar St', 1033, 745, 155, -34],
      ['Veggie Galaxy', 371, 628, 208, 0, 'food'], ['Central Square', 203, 476, 234, 0, 'stop'], ['Sidney St', 400, 742, 152, -52], ['St', 123, 1356, 30, -25],
      ['Massachusetts', 820, 1058, 222, 0, 'edu'], ['Institute of Technology', 820, 1101, 338, 0, 'edu'], ['Briggs Field', 440, 1286, 182, 0, 'green']
    ],
    [
      ['rd St', 57, 127, 66, 3], ['Nickerson Field', 251, 232, 235, 0, 'poi'], ['HRI Hospital', 118, 483, 187, 0, 'med'],
      ['Commonwealth Ave', 528, 405, 327, 9], ['Dummer St', 487, 488, 168, 8], ['Joan & Edgar', 720, 544, 196, 0, 'poi'],
      ['Booth Theatre', 720, 586, 211, 0, 'poi'], ['Egmont St', 421, 553, 150, 8], ['Rd', 46, 578, 36, 5], ['Thatcher St', 446, 630, 165, 9],
      ['NORTH', 56, 640, 150, 0, 'hood'], ['BROOKLINE', 56, 688, 250, 0, 'hood'], ['Ewe St', 500, 715, 98, 6], ['Ivy St', 803, 724, 75, 5],
      ['Euston St', 964, 673, 137, 6], ["St Mary's St", 1082, 693, 195, -82], ['Pleasant St', 301, 838, 185, -86], ['Still St', 374, 813, 97, -84],
      ['Browne St', 410, 898, 150, 6], ['Babcock St', 63, 922, 180, -76], ['Green St', 142, 1033, 132, -56], ['Hawes St', 838, 1027, 132, 69],
      ['Monmouth St', 987, 986, 190, -19], ['Beech Rd', 757, 1157, 135, -18], ['Arcadian Hotel', 467, 1090, 222, 0, 'poi'],
      ['Fugakyu', 239, 1192, 128, 0, 'food'], ['Fiorentina', 48, 1147, 160, 0, 'food'], ['oro', 35, 1310, 50, 0, 'food'], ['Longwood', 316, 1314, 150, 6],
      ['Hyatt Regency', 1190, 161, 213, 0, 'poi'], ['Boston / Cambridge', 1189, 204, 300, 0, 'poi'], ['Charles River', 1122, 265, 206, 2, 'river'],
      ['Boston University', 1175, 1241, 262, 0, 'edu'], ['Fenway Campus', 1175, 1283, 246, 0, 'edu']
    ],
    [
      ['Charles River', 570, 207, 206, -9, 'river'], ['Harvard Bridge', 1048, 152, 222, 0, 'poi'], ['Storrow Dr', 572, 425, 182, 5],
      ['Bay State Rd', 727, 491, 182, 3], ['Cafe', 1098, 493, 72, 0, 'food'], ['Tsai Performance', 141, 518, 265, 0, 'poi'], ['Center', 141, 561, 102, 0, 'poi'],
      ['Beacon St', 536, 635, 165, -21], ['Lansdowne', 473, 773, 172, 0, 'stop'], ['AUDUBON', 108, 755, 208, 0, 'hood'], ['CIRCLE', 108, 803, 150, 0, 'hood'],
      ['Fenway Park', 642, 851, 194, 0, 'poi'], ['The Verb Hotel', 668, 970, 220, 0, 'poi'], ['Charlesgate', 963, 677, 200, -86],
      ['Fenway', 157, 971, 117, 0, 'stop'], ['Fenway', 1084, 912, 122, -84], ['Park Dr', 815, 1074, 130, 84],
      ['FENWAY-', 573, 1107, 218, 0, 'hood'], ['KENMORE', 573, 1157, 230, 0, 'hood']
    ]
  ];

  const sizes = { hood: 41, river: 36, edu: 35, poi: 35, food: 35, med: 35, stop: 34, green: 35, street: 37 };

  // Markers below share one coordinate system across all tiles.
  const circles = [[222, 680, '2A'], [653, 1253, '2A'], [1230, 1650, '2A'], [1895, 2185, '2A'], [1980, 2504, '3'], [680, 2644, '2'], [825, 2966, '2'], [1768, 3230, '2'], [2218, 2902, '2']];
  const usRoutes = [[437, 1470, '3'], [466, 2052, '3'], [993, 2807, '3'], [170, 2986, '20'], [794, 3085, '20'], [1590, 2673, '3']];
  const interstates = [[240, 2538], [633, 2953], [1268, 3276]];
  const stations = [[265, 975], [1315, 1715], [1583, 3365], [1267, 3563]];
  const pois = [
    ['cap', 381, 263], ['cap', 487, 650], ['cap', 55, 1157], ['cap', 81, 1669], ['cap', 538, 1874], ['cap', 1930, 2301], ['cap', 1172, 3832],
    ['museum', 607, 538], ['museum', 572, 921], ['bed', 52, 1036], ['bed', 1492, 1205], ['bed', 321, 2180], ['bed', 538, 2321], ['bed', 1188, 2756],
    ['bed', 467, 3682], ['bed', 1779, 3562], ['cart', 1450, 292], ['cart', 607, 2119], ['cart', 1395, 1461], ['cross', 1255, 833], ['cross', 117, 3073],
    ['fork', 1481, 1870], ['fork', 239, 3783], ['tree', 1550, 2529], ['arena', 251, 2824], ['arena', 1753, 3441], ['mask', 719, 3136], ['mask', 1253, 3112],
    ['case', 2101, 1578], ['bridge', 2162, 2746]
  ];
  const areaLayers = ['campus', 'sage', 'plain', 'pink', 'park', 'darkpark', 'sand'];
</script>

{#snippet statusBar()}
  <header class="status">
    <div class="side">
      <svg class="bars" viewBox="0 0 34 21"><rect x="0" y="13" width="6.5" height="8" rx="2" /><rect x="9" y="9" width="6.5" height="12" rx="2" /><g opacity=".22"><rect x="18" y="5" width="6" height="16" rx="2" /><rect x="27.5" y="0" width="6" height="21" rx="2" /></g></svg>
      <span class="carrier">Mint</span>
      <svg class="wifi" viewBox="0 0 30 22"><path d="M2 8.2Q15-3.6 28 8.2M7 13.4Q15 6.2 23 13.4" fill="none" stroke="#fff" stroke-width="4" /><path d="M10.4 17Q15 13 19.6 17L15 21.7Z" /></svg>
    </div>
    <b>19:00</b>
    <div class="side right">
      <svg class="loc" viewBox="0 0 18 18"><path d="M17.6.4L10.8 17.4C10.4 18.3 9.3 18 9.3 17V8.8H1C0 8.8-.3 7.6.7 7.2Z" /></svg>
      <svg class="lock" viewBox="0 0 21 20"><path d="M17.5 12.8A8.2 8.2 0 1 1 17.3 6" fill="none" stroke="#fff" stroke-width="2" /><path d="M14.8 7.8H21L18 12Z" /><rect x="6.2" y="8.7" width="7.2" height="6" rx="1" /><path d="M7.7 9V7.2a2.1 2.1 0 0 1 4.2 0V9" fill="none" stroke="#fff" stroke-width="1.4" /></svg>
      <span class="percent">100%</span>
      <svg class="battery" viewBox="0 0 46 24"><rect x="1" y="2" width="41" height="20" rx="6" fill="none" stroke="#777" stroke-width="1.8" /><rect x="3.7" y="4.6" width="35.6" height="14.8" rx="3.5" fill="#34c759" /><path d="M44 8.5Q46.5 12 44 15.5Z" fill="#777" /><path d="M24.5 0L13 13.5H20L17.8 24L30 10.5H22.7Z" stroke="#000" stroke-width="1.6" /></svg>
    </div>
  </header>
{/snippet}

<main>
  <section class="phone">
    {@render statusBar()}
    <div class="home">
      <svg class="logo" viewBox="0 215 732 150" aria-label="BL(u)E CRAB">
        {#each logo as p}
          <text x={p.x} y={p.y} font-size={p.s} textLength={p.w} lengthAdjust="spacingAndGlyphs">{p.t}</text>
        {/each}
      </svg>
      <div class="pair">
        <div class="action">
          <button aria-label="Settings"><svg viewBox="0 0 24 24"><path d="M19.14 12.94c.04-.3.06-.61.06-.94 0-.32-.02-.64-.07-.94l2.03-1.58c.18-.14.23-.41.12-.61l-1.92-3.32c-.12-.22-.37-.29-.59-.22l-2.39.96c-.5-.38-1.03-.7-1.62-.94l-.36-2.54c-.04-.24-.24-.41-.48-.41h-3.84c-.24 0-.43.17-.47.41l-.36 2.54c-.59.24-1.13.57-1.62.94l-2.39-.96c-.22-.08-.47 0-.59.22L2.74 8.87c-.12.21-.08.47.12.61l2.03 1.58c-.05.3-.09.63-.09.94s.02.64.07.94l-2.03 1.58c-.18.14-.23.41-.12.61l1.92 3.32c.12.22.37.29.59.22l2.39-.96c.5.38 1.03.7 1.62.94l.36 2.54c.05.24.24.41.48.41h3.84c.24 0 .44-.17.47-.41l.36-2.54c.59-.24 1.13-.56 1.62-.94l2.39.96c.22.08.47 0 .59-.22l1.92-3.32c.12-.22.07-.47-.12-.61l-2.01-1.58zM12 15.6c-1.98 0-3.6-1.62-3.6-3.6s1.62-3.6 3.6-3.6 3.6 1.62 3.6 3.6-1.62 3.6-3.6 3.6z" /></svg></button>
          <span>Settings</span>
        </div>
        <div class="action">
          <button aria-label="Report"><svg viewBox="0 0 24 24"><path d="M22 3l-1.67 1.67L18.67 3 17 4.67 15.33 3l-1.66 1.67L12 3l-1.67 1.67L8.67 3 7 4.67 5.33 3 3.67 4.67 2 3v16c0 1.1.9 2 2 2h16c1.1 0 2-.9 2-2V3zM11 19H4v-6h7v6zm9 0h-7v-2h7v2zm0-4h-7v-2h7v2zm0-4H4V8h16v3z" /></svg></button>
          <span>Report</span>
        </div>
      </div>
      <div class="action">
        <button aria-label="Start Scanning"><svg viewBox="0 0 24 24"><path d="M8 6.82v10.36c0 .79.87 1.27 1.54.84l8.14-5.18c.62-.39.62-1.29 0-1.69L9.54 5.98C8.87 5.55 8 6.03 8 6.82z" /></svg></button>
        <span>Start Scanning</span>
      </div>
    </div>
  </section>

  <section class="phone">
    {@render statusBar()}
    <div class="report">
      <div class="titlebar">
        <svg class="back" viewBox="0 0 22 38"><path d="M19.5 2.5L3 19L19.5 35.5" /></svg>
        <h1>Report</h1>
        <svg class="sort" viewBox="0 0 36 25"><path d="M0 0H36V4H0ZM0 10.3H24V14.3H0ZM0 20.6H12V24.6H0Z" /></svg>
      </div>
      <div class="chips">
        {#each filters as f}
          <div class="chip" class:on={f.on}>{f.name}</div>
        {/each}
      </div>
      <ul>
        {#each devices as d}
          <li>
            <i class={d.level}></i>
            <div class="info"><h2>{d.name}</h2><p>{d.mac}</p></div>
            <svg viewBox="0 0 15 23"><path d="M2 1.8L11.8 11.5L2 21.2" /></svg>
          </li>
        {/each}
      </ul>
    </div>
  </section>

  <section class="phone">
    {@render statusBar()}
    <div class="map">
      <svg class="canvas" viewBox="24 165 2196 3789" preserveAspectRatio="none">
        {#each areaLayers as layer}
          {#each tiles as t}
            {#if t[layer]}<path class={layer} transform="translate({t.x} {t.y})" d={t[layer]} />{/if}
          {/each}
        {/each}
        <path class="water" d="M24 1350L130 1335L200 1332L290 1350L350 1385L400 1455L440 1520L455 1620L460 1790L450 1930L455 2050L470 2190L480 2340L460 2420L470 2510L490 2620L560 2700L660 2765L800 2835L860 2850L960 2835L1110 2825L1240 2825L1310 2800L1470 2730L1560 2700L1730 2645L1960 2570L2070 2490L2220 2420V2940L2040 2980L1960 3020L1870 3040L1750 3045L1670 3035L1490 2985L1310 3005L1110 2985L820 2940L700 2930L620 2900L480 2810L400 2740L335 2655L320 2580L330 2490L380 2290L385 2190L370 2090L360 1850L355 1690L350 1570L300 1455L200 1450L24 1460Z" />
        <path class="beacon" d="M2185 160Q2205 195 2222 235V160Z" />
        <path class="dock" d="M1735 2632L1790 2618L1795 2650L1745 2665Z" />
        {#each tiles as t}
          {#if t.water}<path class="water" transform="translate({t.x} {t.y})" d={t.water} />{/if}
        {/each}
        {#each ['rail', 'thin', 'minor'] as layer}
          {#each tiles as t}
            {#if t[layer]}<path class="line {layer}" transform="translate({t.x} {t.y})" d={t[layer]} />{/if}
          {/each}
        {/each}
        {#each ['mid', 'major'] as layer}
          {#each tiles as t}<path class="line casing {layer}" transform="translate({t.x} {t.y})" d={t[layer]} />{/each}
          {#each tiles as t}<path class="line {layer}" transform="translate({t.x} {t.y})" d={t[layer]} />{/each}
        {/each}
        <g class="line">
          <path class="loops" d="M24 2296Q85 2300 75 2350T24 2400M24 2310Q70 2300 120 2370L210 2530L300 2690M150 2440Q100 2240 150 2130Q200 2035 255 2055Q310 2100 260 2125M160 2440Q130 2290 165 2190Q210 2140 290 2120M140 2440Q115 2260 160 2120Q220 2010 270 2080Q290 2110 325 2065M24 2370Q100 2330 130 2260L150 2160M24 2410Q140 2350 165 2260M150 2440L300 2680M175 2440L330 2670" />
          <path class="highway casing" d="M24 2440L100 2450L190 2490L250 2570L290 2660L350 2760L600 2945L640 2975L820 3060L900 3130L1000 3190L1110 3225L1300 3275L1500 3325M1700 3331H2220" />
          <path class="highway" d="M24 2440L100 2450L190 2490L250 2570L290 2660L350 2760L600 2945L640 2975L820 3060L900 3130L1000 3190L1110 3225L1300 3275L1500 3325M1700 3331H2220" />
          <path class="highway tunnel" d="M1540 3331H1700" />
          <path class="parkway casing" d="M24 1310L100 1308L200 1302L300 1315L380 1370L430 1460L465 1560L470 1700L462 1900L465 2050L475 2200L500 2380L540 2480L610 2570L700 2640L860 2760L960 2805L1110 2815L1240 2810L1330 2780L1500 2710L1620 2665L1910 2530L2220 2400M24 1475L130 1480L240 1500L300 1550L330 1620V1810L355 2120L368 2250L310 2480L315 2600L345 2690L380 2740L480 2820L600 2910L680 2940L800 2960L1110 2995L1510 3040L1810 3075L1930 3070L2040 3030L2220 2995M1960 3045L2060 2985L2220 2955" />
          <path class="parkway" d="M24 1310L100 1308L200 1302L300 1315L380 1370L430 1460L465 1560L470 1700L462 1900L465 2050L475 2200L500 2380L540 2480L610 2570L700 2640L860 2760L960 2805L1110 2815L1240 2810L1330 2780L1500 2710L1620 2665L1910 2530L2220 2400M24 1475L130 1480L240 1500L300 1550L330 1620V1810L355 2120L368 2250L310 2480L315 2600L345 2690L380 2740L480 2820L600 2910L680 2940L800 2960L1110 2995L1510 3040L1810 3075L1930 3070L2040 3030L2220 2995M1960 3045L2060 2985L2220 2955" />
          {#each tiles as t}
            {#if t.yellow}<path class="yellow casing" transform="translate({t.x} {t.y})" d={t.yellow} /><path class="yellow" transform="translate({t.x} {t.y})" d={t.yellow} />{/if}
            {#if t.yellowThin}<path class="yellow slim" transform="translate({t.x} {t.y})" d={t.yellowThin} />{/if}
          {/each}
          <path class="major" d="M300 1827L460 1810M330 2125L450 2080M845 2790L822 3060M2030 2410L2222 2895" />
          <path class="footbridge" d="M355 1385L248 1518M900 2850L810 2935" />
          <path class="median" d="M1640 2690L1780 2625M1790 2600L1900 2552M1980 2530L2110 2470" />
        </g>
        {#each pois as [kind, x, y]}
          <g class="mark {kind}" transform="translate({x} {y})">
            {#if kind === 'cap'}<path d="M-14-7L-6-13H15V-7H10V1H-8V-3H-14ZM-9 4H10V10L4 13H-5L-9 10Z" /><path class="cut" d="M-7-6H11" />
            {:else if kind === 'museum'}<path d="M0-16L13-9V-6H-13V-9ZM-11-3H11V10H13V14H-13V10H-11Z" /><path class="cut" d="M-5 9V1L0 6L5 1V9" />
            {:else if kind === 'bed'}<path d="M-13-11H-10V4H13V10H-13ZM-1-6H10Q13-6 13-3V2H-1ZM-8-5H-3V1H-8Z" />
            {:else if kind === 'cart'}<path d="M-12-9H8L9-12H14V-9H11L8 6H-8V3H6L7 0H-10ZM-8 8H-3V12H-8ZM4 8H9V12H4Z" />
            {:else if kind === 'cross'}<path d="M-4-16H4V-4H16V4H4V16H-4V4H-16V-4H-4Z" />
            {:else if kind === 'fork'}<path d="M-11-15H-8V-5H-6V-15H-4V-5H-2V-15H0V-3L-4 2V15H-7V2L-11-3ZM5-10Q6-16 10-15V15H7V4H5Z" />
            {:else if kind === 'tree'}<path d="M-5-14H5L15-5V2L4 4L3 12L8 15H-8L-3 12L-4 4L-15 2V-5Z" />
            {:else if kind === 'arena'}<path d="M-3-15L6-12L-1-9V-6L12-3V13H-12V-3L-3-6Z" /><path class="cut" d="M-8 2H8M-3 13V6H3V13" />
            {:else if kind === 'mask'}<path d="M-16-12L0-9V4L-8 8L-16 2ZM2-8H16V5L9 12L2 6Z" /><path class="cut" d="M-12-5H-9M-6-4H-4M5-2H8M11-2H13M6 6L9 3L12 6" />
            {:else if kind === 'case'}<path class="outline" d="M-11-5H11V11H-11ZM-6-5L0-12L6-5M0-1V7M-4 3H4" />
            {:else}<path d="M-15-3Q0-12 15-3V1H12V6H8V1H-8V6H-12V1H-15Z" />{/if}
          </g>
        {/each}
        {#each tiles as t, i}
          <g transform="translate({t.x} {t.y})">
            {#each labels[i] as [text, x, y, w, angle, kind = 'street']}
              <text class="label {kind}" transform="translate({x} {y}) rotate({angle})" y={sizes[kind] * 0.35} font-size={sizes[kind]} textLength={w} lengthAdjust={kind === 'hood' ? 'spacing' : 'spacingAndGlyphs'}>{text}</text>
            {/each}
          </g>
        {/each}
        {#each circles as [x, y, n]}
          <g class="badge" transform="translate({x} {y})"><circle r="28" /><text y="9">{n}</text></g>
        {/each}
        {#each usRoutes as [x, y, n]}
          <g class="badge" transform="translate({x} {y})"><path d="M-21-26Q-10-19 0-25Q10-19 21-26L28-17Q22-8 28 4Q30 24 9 23L0 27L-9 23Q-30 24-28 4Q-22-8-28-17Z" /><text y="9">{n}</text></g>
        {/each}
        {#each interstates as [x, y]}
          <g transform="translate({x} {y})"><path d="M-23-26Q-10-21 0-26Q10-21 23-26Q40 14 0 28Q-40 14-23-26Z" fill="#3a55b0" stroke="#fff" stroke-width="3" /><path d="M-23-26Q-10-21 0-26Q10-21 23-26L26-13H-26Z" fill="#d02e33" /><text class="interstate" y="13">90</text></g>
        {/each}
        {#each stations as [x, y]}
          <g transform="translate({x} {y})"><circle r="24" fill="#fff" stroke="#222" stroke-width="3" /><path d="M-12-9H12M0-9V14" stroke="#111" stroke-width="6.5" /></g>
        {/each}
        <rect x="291" y="2688" width="69" height="36" fill="#16913f" /><text class="exit" x="325" y="2715">131</text>
        <path class="route" d="M828 1388L890 1407L978 1436L1110 1552L1335 1730L1372 1817L1411 1850L1409 1917L1335 2030L1280 2165L1288 2278L1110 2504L1072 2556L1090 2610L1050 2645" />
        <g fill="#f84437"><circle cx="828" cy="1388" r="57" /><circle cx="1372" cy="1816" r="58" /><circle cx="1111" cy="2633" r="57" /><circle cx="1161" cy="2655" r="57" /><circle cx="1127" cy="2730" r="57" /></g>
      </svg>
      <button class="mapback" aria-label="Back"><svg class="back" viewBox="0 0 22 38"><path d="M19.5 2.5L3 19L19.5 35.5" /></svg></button>
    </div>
  </section>
</main>

<style>
  :global(body) { margin: 0; background: #fff; overflow: hidden; }
  main { display: flex; gap: 77px; box-sizing: border-box; width: 2350px; height: 1334px; padding: 16px 0; font-family: Inter, 'Liberation Sans', sans-serif; color: #fff; }
  .phone { width: 732px; height: 1302px; display: flex; flex-direction: column; overflow: hidden; background: #505e75; }
  h1, h2, p, ul { margin: 0; padding: 0; }
  svg { display: block; fill: #fff; flex: none; }
  button { border: 0; padding: 0; background: #2f3142; }

  .status { height: 39px; flex: none; display: grid; grid-template-columns: 1fr auto 1fr; align-items: center; background: #000; padding: 0 11px 0 12px; font-size: 22.5px; line-height: 40px; }
  .status b { font-weight: 600; font-size: 24px; letter-spacing: -.1px; }
  .side { display: flex; align-items: center; }
  .right { justify-content: flex-end; }
  .bars { width: 34px; height: 21px; margin-right: 7px; }
  .carrier { width: 47px; margin-right: 9px; letter-spacing: .1px; }
  .wifi { width: 30px; height: 22px; }
  .loc { width: 18px; height: 18px; margin-right: 12px; }
  .lock { width: 21px; height: 20px; margin-right: 7px; }
  .percent { width: 62px; margin-right: 10px; }
  .battery { width: 46px; height: 24px; }

  .home { flex: 1; display: flex; flex-direction: column; align-items: center; padding-top: 160px; }
  .logo { width: 732px; height: 150px; margin-bottom: 144.5px; }
  .logo text { font-family: 'DejaVu Serif', serif; font-weight: 700; stroke: #fff; stroke-width: 5; stroke-linejoin: miter; }
  .pair { display: flex; gap: 124px; margin-bottom: 76.5px; }
  .action { width: 188px; height: 277px; display: flex; flex-direction: column; align-items: center; }
  .action button { width: 188px; height: 188px; flex: none; border-radius: 55px; display: grid; place-items: center; box-shadow: 0 8px 16px rgba(35, 43, 50, .42); }
  .action button svg { width: 70px; height: 70px; }
  .action span { margin-top: 34px; white-space: nowrap; font-size: 28px; line-height: 36px; font-weight: 650; letter-spacing: 1.5px; }

  .report { flex: 1; min-height: 0; padding-left: 31px; }
  .titlebar { height: 112px; box-sizing: border-box; display: flex; justify-content: space-between; padding: 0 37px 0 12px; }
  .titlebar h1 { margin: 11px -9px 0 0; font-size: 50px; line-height: 67px; font-weight: 650; letter-spacing: 2px; }
  .back { width: 22px; height: 38px; margin-top: 36px; fill: none; stroke: #fff; stroke-width: 4; stroke-linecap: round; stroke-linejoin: round; }
  .sort { width: 36px; height: 25px; margin-top: 42px; }
  .chips { display: flex; gap: 24px; height: 88px; width: 701px; overflow: hidden; }
  .chip { box-sizing: border-box; flex: none; height: 88px; border: 4px solid #f8aa1d; border-radius: 44px; padding: 0 0 0 44px; white-space: nowrap; font-size: 28px; line-height: 82px; font-weight: 650; letter-spacing: 1px; }
  .on { background: #f8aa1d; }
  .chip:nth-child(1) { width: 284px; }
  .chip:nth-child(2) { width: 237px; }
  .chip:nth-child(3) { width: 200px; }
  ul { list-style: none; display: flex; flex-direction: column; gap: 16px; padding-top: 11px; width: 670px; }
  li { box-sizing: border-box; height: 155.8px; display: flex; align-items: center; background: #2f3142; border-radius: 20px; padding: 0 93px 0 63px; }
  li:nth-child(5) { height: 204.7px; }
  li i { width: 78px; height: 78px; border-radius: 50%; flex: none; }
  .high { background: #ba4531; }
  .mid { background: #f8aa1d; }
  .info { width: 350px; margin: 0 auto 0 32px; padding-bottom: 10px; }
  li:nth-child(5) .info { padding-bottom: 0; }
  h2 { font-size: 38px; line-height: 59px; font-weight: 650; letter-spacing: 1.6px; }
  p { font-size: 29px; line-height: 41px; font-weight: 600; letter-spacing: 1.15px; }
  li svg { width: 15px; height: 23px; fill: none; stroke: #fff; stroke-width: 3.4; }

  .map { position: relative; flex: 1; background: #e5e4e1; }
  .canvas { width: 732px; height: 1263px; background: #e5e4e1; }
  .mapback { position: absolute; left: 8px; top: 8px; width: 78px; height: 78px; border-radius: 14px; }
  .mapback .back { margin: 0 0 0 28px; }
  .canvas .campus { fill: #e6deb8; }
  .canvas .sage { fill: #d1e0b9; }
  .canvas .plain { fill: #e3e2df; }
  .canvas .pink { fill: #ebd4dc; }
  .canvas .park { fill: #b6e59e; }
  .canvas .darkpark { fill: #a8de8f; }
  .canvas .sand { fill: #ebe4c0; }
  .canvas .water { fill: #75cff0; }
  .canvas .beacon { fill: #f2d161; }
  .canvas .dock { fill: #e0e0e0; }
  .line { fill: none; stroke: #fff; stroke-linejoin: round; }
  .line path { fill: none; }
  .rail { stroke: #d3d2cd; stroke-width: 3; }
  .thin { stroke: #f7f7fa; stroke-width: 3.2; }
  .minor { stroke: #fff; stroke-width: 6.5; }
  .canvas path.mid { background: none; stroke-width: 14; }
  .canvas path.major { stroke-width: 21; }
  .canvas path.mid.casing { stroke: #dcdce6; stroke-width: 17; }
  .canvas path.major.casing { stroke: #dcdce6; stroke-width: 24; }
  .loops { stroke: #ffa45c; stroke-width: 5; }
  .highway { stroke: #ffa45c; stroke-width: 35; }
  .tunnel { stroke: #ffbd8c; }
  .parkway { stroke: #f2d161; stroke-width: 27; }
  .yellow { stroke: #f2d161; stroke-width: 22; }
  .slim { stroke-width: 7; }
  .highway.casing { stroke: #fbe7cf; stroke-width: 40; }
  .parkway.casing { stroke: #faf3d8; stroke-width: 32; }
  .yellow.casing { stroke: #faf3d8; stroke-width: 26; }
  .footbridge { stroke: #d9dade; stroke-width: 7; }
  .median { stroke: #fff7da; stroke-width: 3; }
  .label { font-family: Roboto, 'Open Sans', sans-serif; font-weight: 500; text-anchor: middle; paint-order: stroke; stroke: rgba(255, 255, 255, .75); stroke-width: 4; stroke-linejoin: round; }
  .street { fill: #4c4c4c; }
  .label.poi { fill: #7d6054; }
  .edu { fill: #857522; }
  .food { fill: #d0602f; }
  .med { fill: #b05a80; }
  .green { fill: #557b40; }
  .stop { fill: #252525; font-weight: 700; }
  .hood { fill: #7180ad; font-weight: 400; }
  .river { fill: #4b79c6; font-style: italic; stroke: none; }
  .mark { fill: #76503f; stroke: #fff; stroke-width: 1; }
  .mark.cap { fill: #8a7a0c; }
  .mark.cross { fill: #b05a80; }
  .mark.fork { fill: #e06a30; }
  .mark.tree { fill: #3d8a22; }
  .cut, .outline { fill: none; stroke: #f4eed8; stroke-width: 2.6; }
  .outline { stroke: #76503f; }
  .badge { fill: #fff; stroke: #3c3c3c; stroke-width: 3.5; }
  .badge text { fill: #333; stroke: none; text-anchor: middle; font: 700 26px Roboto, sans-serif; }
  .interstate, .exit { fill: #fff; text-anchor: middle; font: 700 26px Roboto, sans-serif; }
  .route { fill: none; stroke: #f84437; stroke-width: 22; }
</style>
